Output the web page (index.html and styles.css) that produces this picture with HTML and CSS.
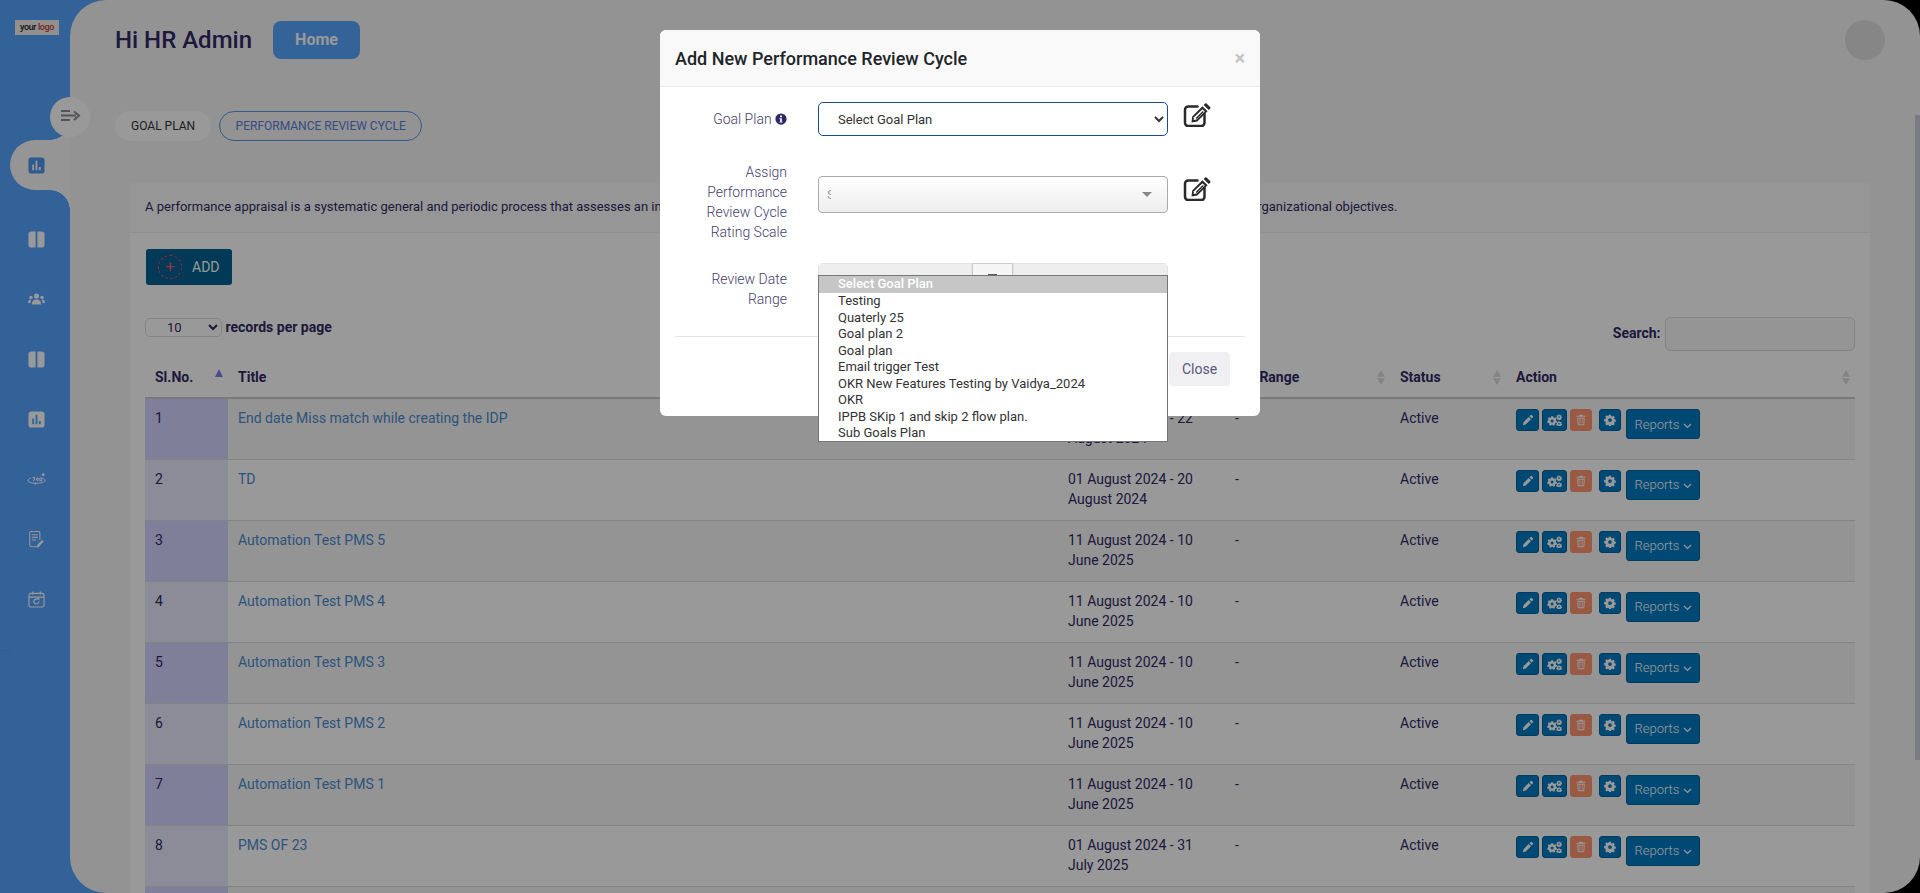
FILE: index.html
```html
<!DOCTYPE html>
<html lang="en">
<head>
    <meta charset="UTF-8">
    <title>Performance Review Cycle</title>
    <link rel="stylesheet" href="styles.css">
</head>
<body>
    <svg class="sprite" aria-hidden="true">
        <symbol id="i-pencil" viewBox="0 0 16 16"><path d="M11.3 1.6a1.4 1.4 0 0 1 2 0l1.1 1.1a1.4 1.4 0 0 1 0 2L13 6.100 9.900 3zM8.900 4 12 7.100 5 14.100 1.200 15l.8-3.900z"/></symbol>
        <symbol id="i-cog" viewBox="0 0 16 16"><path fill-rule="evenodd" d="M6.700 1h2.600l.4 1.900 1.200.5 1.600-1 1.900 1.900-1 1.600.5 1.200 1.900.4v2.600l-1.900.4-.5 1.200 1 1.600-1.900 1.900-1.600-1-1.200.5-.4 1.900H6.700l-.4-1.900-1.200-.5-1.600 1-1.900-1.900 1-1.600-.5-1.200L.2 9.300V6.700l1.900-.4.5-1.200-1-1.600 1.900-1.900 1.600 1 1.200-.5zM8 5.500a2.500 2.500 0 1 0 0 5 2.500 2.500 0 0 0 0-5z"/></symbol>
        <symbol id="i-cogs" viewBox="0 0 20 16"><path fill-rule="evenodd" d="M5.500 3h2.600l.4 1.500 1.300.6 1.400-.7 1.500 1.800-1 1.200.3 1.400 1.400.7-.5 2.300-1.600.1-.9 1.100.3 1.500-2.200 1-1-1.200H6.100l-1 1.200-2.200-1 .3-1.500-.9-1.100-1.600-.1-.5-2.300 1.400-.7.3-1.400-1-1.200 1.500-1.800 1.400.7 1.300-.6zM6.800 7.300a2 2 0 1 0 0 4 2 2 0 0 0 0-4z"/><path fill-rule="evenodd" d="M15.200.5h1.600l.2 1 .8.400.9-.5.900 1.100-.6.800.2.800.9.400-.3 1.400-1 .1-.5.700.2 1-1.300.6-.7-.8h-.8l-.6.800-1.300-.6.200-1-.5-.7-1-.1-.3-1.400.9-.4.2-.8-.6-.8.9-1.100.9.5.8-.4zM16 3a1.100 1.100 0 1 0 0 2.200A1.100 1.100 0 0 0 16 3z"/><path fill-rule="evenodd" d="M15.200 9.500h1.600l.2 1 .8.400.9-.5.900 1.100-.6.800.2.800.9.400-.3 1.400-1 .1-.5.700.2 1-1.300.6-.7-.8h-.8l-.6.800-1.300-.6.200-1-.5-.7-1-.1-.3-1.400.9-.4.200-.8-.6-.8.9-1.100.9.500.8-.4zM16 12a1.100 1.100 0 1 0 0 2.200 1.100 1.100 0 0 0 0-2.200z"/></symbol>
        <symbol id="i-trash" viewBox="0 0 16 16"><path d="M6 1h4l.7 1.300H14v1.400H2V2.300h3.300z"/><path fill-rule="evenodd" d="M3 5h10l-.6 9a1.200 1.200 0 0 1-1.200 1H4.800a1.200 1.200 0 0 1-1.200-1zm1.300 1.200.5 7.600h6.400l.5-7.600z"/><path d="M6 7h1v5.500H6zM9 7h1v5.500H9z"/></symbol>
        <symbol id="i-edit" viewBox="0 0 28 24"><path d="M14.500 3.500H5.200A3.200 3.200 0 0 0 2 6.700v13.100A3.200 3.200 0 0 0 5.200 23h13.100a3.200 3.200 0 0 0 3.200-3.200V11" fill="none" stroke="currentColor" stroke-width="2.500" stroke-linecap="round"/><path d="M23.500.5l3.800 3.700c.4.400.4 1 0 1.400l-1.500 1.500-5.200-5.100L22.100.5c.4-.4 1-.4 1.400 0zM19.400 3.200l5.200 5.100-10.300 10.200-5.800 1 .7-6z"/><path d="M19.500 6.200l2.300 2.300-8.200 8.100-3 .5.400-2.800z" fill="#fff"/><path d="M19.800 7.900l1 1-7.200 7.100-1-1z"/></symbol>
        <symbol id="i-chart" viewBox="0 0 18 18"><path fill-rule="evenodd" d="M3.500.5h11a3 3 0 0 1 3 3v11a3 3 0 0 1-3 3h-11a3 3 0 0 1-3-3v-11a3 3 0 0 1 3-3zM4.500 8v6h2V8zm3.500-4v10h2V4zm3.500 6.500V14h2v-3.500z"/></symbol>
        <symbol id="i-split" viewBox="0 0 18 18"><path d="M8 .5v17H3.500a3 3 0 0 1-3-3v-11a3 3 0 0 1 3-3zM10 .5h4.500a3 3 0 0 1 3 3v11a3 3 0 0 1-3 3H10z"/></symbol>
    </svg>

    <div class="layout">
        <aside class="sidebar">
            <div class="logo"><span>your</span> <span class="logo-word">logo</span></div>
            <button class="collapse-btn" type="button" aria-label="Toggle menu">
                <svg width="20" height="12" viewBox="0 0 20 12"><path d="M0 1h9M0 5.500h15M0 10h9M13 1.500 18 5.500 13 10" fill="none" stroke="currentColor" stroke-width="2"/></svg>
            </button>
            <nav class="nav">
                <a class="nav-item active"><svg class="nav-icon"><use href="#i-chart"/></svg></a>
                <a class="nav-item"><svg class="nav-icon"><use href="#i-split"/></svg></a>
                <a class="nav-item">
                    <svg class="nav-icon" viewBox="0 0 20 16"><circle cx="10" cy="4" r="3"/><path d="M4.500 14c0-4 2-6 5.500-6s5.500 2 5.500 6z"/><circle cx="3.500" cy="5.500" r="2"/><circle cx="16.500" cy="5.500" r="2"/><path d="M0 12c0-2.500 1-4 3-4l.8.300C3 9.500 3 11 3 12zM20 12c0-2.500-1-4-3-4l-.8.300c.8 1.200.8 2.700.8 3.700z"/></svg>
                </a>
                <a class="nav-item"><svg class="nav-icon"><use href="#i-split"/></svg></a>
                <a class="nav-item"><svg class="nav-icon"><use href="#i-chart"/></svg></a>
                <a class="nav-item">
                    <svg class="nav-icon wide" viewBox="0 0 20 14"><g fill="none" stroke="currentColor"><path d="M4 5.500C2 6.200 1 7 1 8c0 1.600 3.500 3 9 3s9-1.400 9-3c0-1-1-1.800-3-2.500"/><path d="M6 5h2.500l-1.500 1.300c1.500 0 1.500 2-.5 1.700M12 6.500c-.4-1.800-2-1.800-2 .2s2 1.800 2 .6-2-1-2 0M13.500 5.500h2v3h-2z"/></g><circle cx="17" cy="2" r="1.500"/><path d="M8 9.500v3.500l2-1.700z"/></svg>
                </a>
                <a class="nav-item">
                    <svg class="nav-icon" viewBox="0 0 18 20"><g fill="none" stroke="currentColor" stroke-width="1.200"><path d="M11 18.500H3a2 2 0 0 1-2-2v-14a2 2 0 0 1 2-2h8a2 2 0 0 1 2 2v8"/><path d="M3.500 4.500h7M3.500 7.500h7M3.500 10.500h5"/></g><path d="M15.500 10.500l2 1.700-5.500 6.300-2.800.9.600-2.900z"/></svg>
                </a>
                <a class="nav-item">
                    <svg class="nav-icon" viewBox="0 0 18 18"><g fill="none" stroke="currentColor" stroke-width="1.200"><rect x="1" y="2.500" width="16" height="14.500" rx="2"/><path d="M1 6.500h16M5 .5v3.500M13 .5v3.500"/><path d="M11.500 11a2.700 2.700 0 1 1-1-2"/></g><path d="M9.500 7.500h2.500v2.500z"/></svg>
                </a>
            </nav>
            <span class="side-mark"></span>
        </aside>

        <main class="panel">
            <header class="topbar">
                <h1 class="greeting">Hi HR Admin</h1>
                <a class="home-btn">Home</a>
                <span class="avatar"></span>
            </header>

            <div class="tabs">
                <a class="tab">GOAL PLAN</a>
                <a class="tab tab-active">PERFORMANCE REVIEW CYCLE</a>
            </div>

            <section class="card">
                <div class="card-head">A performance appraisal is a systematic general and periodic process that assesses an individual employee's job performance and productivity in relation to certain pre-established criteria and organizational objectives.</div>
                <div class="card-body">
                    <button class="add-btn" type="button">
                        <span class="add-ring">+</span>ADD
                    </button>

                    <div class="table-tools">
                        <label class="per-page">
                            <select class="per-page-select"><option>10</option></select>
                            records per page
                        </label>
                        <label class="search">Search: <input type="text"></label>
                    </div>

                    <table class="data-table">
                        <colgroup>
                            <col class="c-no"><col class="c-title"><col class="c-date"><col class="c-range"><col class="c-status"><col class="c-action">
                        </colgroup>
                        <thead>
                            <tr>
                                <th class="sort-up">Sl.No.</th>
                                <th class="sort">Title</th>
                                <th class="sort">Review Period</th>
                                <th class="sort">Set Range</th>
                                <th class="sort">Status</th>
                                <th class="sort">Action</th>
                            </tr>
                        </thead>
                        <tbody id="rows"></tbody>
                    </table>
                </div>
            </section>
        </main>
    </div>

    <span class="scroll-thumb"></span>
    <div class="backdrop"></div>

    <div class="modal">
        <div class="modal-head">
            <h2>Add New Performance Review Cycle</h2>
            <span class="modal-close">&times;</span>
        </div>
        <div class="modal-body">
            <div class="field">
                <label class="field-label">Goal Plan
                    <svg class="info" viewBox="0 0 16 16"><path fill-rule="evenodd" d="M8 .5a7.500 7.500 0 1 1 0 15 7.500 7.500 0 0 1 0-15zM6.800 3.200v2.300h2.400V3.200zM6 7v1.300h.9v3.200H6v1.300h4v-1.300h-.9V7z"/></svg>
                </label>
                <div class="field-control">
                    <select class="goal-select"><option>Select Goal Plan</option></select>
                </div>
                <svg class="edit-icon"><use href="#i-edit"/></svg>
            </div>

            <div class="field field-scale">
                <label class="field-label">Assign Performance Review Cycle Rating Scale</label>
                <div class="field-control">
                    <div class="scale-select"><span>S</span><i></i></div>
                </div>
                <svg class="edit-icon"><use href="#i-edit"/></svg>
            </div>

            <div class="field field-range">
                <label class="field-label">Review Date Range</label>
                <div class="field-control">
                    <div class="range-group">
                        <span class="range-input"></span>
                        <span class="range-cal"><b></b></span>
                        <span class="range-input"></span>
                    </div>
                </div>
            </div>

            <ul class="goal-menu">
                <li class="selected">Select Goal Plan</li>
                <li>Testing</li>
                <li>Quaterly 25</li>
                <li>Goal plan 2</li>
                <li>Goal plan</li>
                <li>Email trigger Test</li>
                <li>OKR New Features Testing by Vaidya_2024</li>
                <li>OKR</li>
                <li>IPPB SKip 1 and skip 2 flow plan.</li>
                <li>Sub Goals Plan</li>
            </ul>
        </div>
        <div class="modal-foot">
            <button class="close-btn" type="button">Close</button>
        </div>
    </div>

    <script>
        const data = [
            ['End date Miss match while creating the IDP', '01 August 2024 - 22 August 2024'],
            ['TD', '01 August 2024 - 20 August 2024'],
            ['Automation Test PMS 5', '11 August 2024 - 10 June 2025'],
            ['Automation Test PMS 4', '11 August 2024 - 10 June 2025'],
            ['Automation Test PMS 3', '11 August 2024 - 10 June 2025'],
            ['Automation Test PMS 2', '11 August 2024 - 10 June 2025'],
            ['Automation Test PMS 1', '11 August 2024 - 10 June 2025'],
            ['PMS OF 23', '01 August 2024 - 31 July 2025']
        ];

        const actions = `
            <div class="actions">
                <button class="act"><svg><use href="#i-pencil"/></svg></button>
                <button class="act act-wide"><svg><use href="#i-cogs"/></svg></button>
                <button class="act act-del"><svg><use href="#i-trash"/></svg></button>
                <button class="act act-gap"><svg><use href="#i-cog"/></svg></button>
                <button class="reports">Reports <svg width="9" height="6" viewBox="0 0 9 6"><path d="M1 1l3.500 3.500L8 1" fill="none" stroke="currentColor" stroke-width="1.200"/></svg></button>
            </div>`;

        // строки таблицы
        document.getElementById('rows').innerHTML = data.map((row, i) => `
            <tr>
                <td class="no">${i + 1}</td>
                <td><a class="row-link">${row[0]}</a></td>
                <td>${row[1]}</td>
                <td>-</td>
                <td>Active</td>
                <td>${actions}</td>
            </tr>`).join('') + '<tr><td class="no"></td><td colspan="5"></td></tr>';
    </script>
</body>
</html>
```

FILE: styles.css
```css
* {
    box-sizing: border-box;
}

html, body {
    height: 100%;
}

body {
    margin: 0;
    background: #000;
    font-family: Roboto, sans-serif;
    font-size: 13px;
    color: #2f2a66;
    overflow: hidden;
}

.sprite {
    display: none;
}

svg {
    fill: currentColor;
}

.layout {
    display: flex;
    height: 893px;
    background: linear-gradient(to right, #55a3ff 200px, #000 200px);
}

/* Боковое меню */
.sidebar {
    width: 70px;
    flex: none;
    position: relative;
    background: #55a3ff;
    color: #fff;
}

.logo {
    position: absolute;
    top: 20px;
    left: 15px;
    width: 44px;
    height: 15px;
    background: #f4f1ee;
    font-size: 9px;
    font-weight: 500;
    letter-spacing: -0.4px;
    text-align: center;
    line-height: 15px;
    color: #222;
}

.logo-word {
    color: #c0392b;
}

.collapse-btn {
    position: absolute;
    top: 97px;
    left: 50px;
    width: 40px;
    height: 40px;
    border: none;
    border-radius: 50%;
    background: #fff;
    color: #8a8a9a;
    z-index: 3;
    padding: 0 0 0 1px;
}

.nav {
    position: absolute;
    top: 140px;
    left: 0;
    width: 70px;
}

.nav-item {
    display: flex;
    align-items: center;
    height: 60px;
    padding-left: 28px;
    color: #fff;
}

.nav-icon {
    width: 17px;
    height: 17px;
}

.nav-icon.wide {
    width: 19px;
    margin-left: -1px;
}

.nav-item.active {
    height: 50px;
    margin-left: 10px;
    padding-left: 18px;
    margin-bottom: 19px;
    background: #f8f8f9;
    border-radius: 25px 0 0 25px;
    position: relative;
    color: #4f97f0;
}

/* вогнутые углы активного пункта */
.nav-item.active:before, .nav-item.active:after {
    content: '';
    position: absolute;
    right: 0;
    width: 20px;
    height: 20px;
}

.nav-item.active:before {
    top: -20px;
    background: radial-gradient(circle at 0 0, #55a3ff 19.5px, #f8f8f9 20px);
}

.nav-item.active:after {
    bottom: -20px;
    background: radial-gradient(circle at 0 100%, #55a3ff 19.5px, #f8f8f9 20px);
}

.side-mark {
    position: absolute;
    top: 650px;
    left: 0;
    width: 10px;
    height: 1px;
    background: #4f97f0;
}

/* Основная панель */
.panel {
    flex: 1;
    min-width: 0;
    height: 893px;
    padding: 0 45px;
    background: #f5f5f7;
    border-radius: 36px;
    overflow: hidden;
}

.topbar {
    display: flex;
    align-items: center;
    height: 80px;
}

.greeting {
    margin: 0 21px 0 0;
    font-size: 24px;
    font-weight: 500;
    color: #2f2a66;
}

.home-btn {
    width: 87px;
    height: 38px;
    line-height: 37px;
    text-align: center;
    border-radius: 8px;
    background: #58a6ff;
    color: #fff;
    font-size: 16px;
    font-weight: 700;
}

.avatar {
    width: 40px;
    height: 40px;
    margin: 0 -10px 0 auto;
    border-radius: 50%;
    background: #e0e0e0;
}

.tabs {
    display: flex;
    gap: 8px;
    margin-top: 31px;
}

.tab {
    height: 30px;
    line-height: 30px;
    padding: 0 16px;
    border-radius: 15px;
    background: #fff;
    font-size: 12px;
    color: #333;
}

.tab-active {
    line-height: 28px;
    padding: 0 15.500px;
    background: transparent;
    border: 1px solid #5a96e4;
    color: #5a7fd8;
}

.card {
    margin: 42px 5px 0 15px;
    background: #fff;
}

.card-head {
    height: 50px;
    line-height: 48px;
    padding-left: 15px;
    background: #fbfbfb;
    border-bottom: 1px solid #f0f0f0;
    white-space: nowrap;
    overflow: hidden;
    font-size: 13px;
}

.card-body {
    padding: 16px 15px 0;
}

.add-btn {
    display: flex;
    align-items: center;
    gap: 10px;
    width: 86px;
    height: 36px;
    margin-left: 1px;
    padding: 0 0 0 12px;
    border: none;
    border-radius: 3px;
    background: #00618f;
    color: #fff;
    font-family: inherit;
    font-size: 14px;
}

.add-ring {
    width: 24px;
    height: 24px;
    line-height: 20px;
    border: 1px dashed #e8486f;
    border-radius: 50%;
    color: #f0557a;
    font-size: 17px;
    text-align: center;
}

.table-tools {
    display: flex;
    justify-content: space-between;
    align-items: flex-start;
    margin-top: 33px;
    height: 42px;
    font-size: 14px;
    font-weight: 700;
}

.per-page-select {
    width: 77px;
    height: 19px;
    padding: 0 0 0 17px;
    border: 1px solid #ddd;
    border-radius: 5px;
    background: transparent;
    font-family: inherit;
    font-size: 13px;
    color: #2f2a66;
}

.search input {
    width: 190px;
    height: 34px;
    margin-left: 1px;
    border: 1px solid #ddd;
    border-radius: 5px;
    background: #f8f8f8;
    vertical-align: middle;
}

.search {
    margin-top: -1px;
}

.data-table {
    width: 100%;
    border-collapse: collapse;
    table-layout: fixed;
}

.c-no { width: 83px; }
.c-date { width: 167px; }
.c-range { width: 165px; }
.c-status { width: 116px; }
.c-action { width: 349px; }

.data-table th {
    position: relative;
    height: 38px;
    padding: 0 10px 4px;
    border-bottom: 2px solid #ccc;
    text-align: left;
    font-size: 14px;
    font-weight: 700;
}

.data-table th:after {
    content: '';
    position: absolute;
    right: 5px;
    top: 10px;
    width: 8px;
    height: 15px;
    background: #dcdcdc;
    clip-path: polygon(50% 0, 100% 45%, 50% 45%, 50% 55%, 100% 55%, 50% 100%, 0 55%, 50% 55%, 50% 45%, 0 45%);
}

.data-table th.sort-up:after {
    top: 9px;
    height: 8px;
    background: #7f7fe6;
    clip-path: polygon(50% 0, 100% 100%, 0 100%);
}

.data-table td {
    height: 61px;
    padding: 9px 10px 0;
    border-bottom: 1px solid #ddd;
    vertical-align: top;
    font-size: 14px;
    line-height: 20px;
}

.data-table tr:nth-child(odd) td {
    background: rgba(0, 0, 0, 0.03);
}

.data-table td.no {
    background: #e9e9ff;
}

.data-table tr:nth-child(odd) td.no {
    background: #d4d4ff;
}

.row-link {
    color: #4a8cd0;
}

.actions {
    display: flex;
    align-items: flex-start;
    gap: 3px;
    margin-top: 1px;
}

.act {
    width: 23px;
    height: 22px;
    padding: 0;
    border: 1px solid #00629c;
    border-radius: 3px;
    background: #007bc2;
    color: #fff;
    display: flex;
    align-items: center;
    justify-content: center;
}

.act svg {
    width: 12px;
    height: 12px;
}

.act-wide {
    width: 25px;
}

.act-wide svg {
    width: 15px;
}

.act-del {
    width: 22px;
    background: #ff9470;
    border-color: #ff9470;
}

.act-gap {
    width: 22px;
    margin-left: 4px;
}

.reports {
    width: 74px;
    height: 30px;
    margin-left: 2px;
    padding: 0;
    border: 1px solid #00629c;
    border-radius: 3px;
    background: #007bc2;
    color: #fff;
    font-family: inherit;
    font-size: 13px;
    font-weight: 300;
}

.scroll-thumb {
    position: absolute;
    top: 115px;
    right: 0;
    width: 5px;
    height: 645px;
    background: #cdcddc;
}

.backdrop {
    position: fixed;
    inset: 0;
    z-index: 5;
    background: rgba(0, 0, 0, 0.4);
}

/* Модальное окно */
.modal {
    position: absolute;
    top: 30px;
    left: 660px;
    z-index: 6;
    width: 600px;
    background: #fff;
    border-radius: 6px;
    color: #5b5680;
}

.modal-head {
    display: flex;
    justify-content: space-between;
    align-items: center;
    height: 57px;
    padding: 0 15px;
    background: #f9f9f9;
    border-bottom: 1px solid #e9e9e9;
    border-radius: 6px 6px 0 0;
}

.modal-head h2 {
    margin: 0;
    font-size: 18px;
    font-weight: 500;
    color: #212529;
}

.modal-close {
    font-size: 20px;
    font-weight: 700;
    color: #c4c4c4;
}

.modal-body {
    position: relative;
    height: 250px;
    margin: 0 15px;
    border-bottom: 1px solid #e5e5e5;
    padding-top: 15px;
}

.field {
    display: flex;
    align-items: flex-start;
    height: 74px;
}

.field-label {
    width: 112px;
    flex: none;
    padding: 7px 0 0 10px;
    text-align: right;
    line-height: 20px;
    font-size: 14px;
    font-weight: 300;
    color: #45406c;
}

.field-control {
    width: 350px;
    margin-left: 31px;
    flex: none;
}

.info {
    width: 12px;
    height: 12px;
    vertical-align: -1px;
    color: #2f2a66;
}

.goal-select {
    width: 100%;
    height: 34px;
    padding-left: 15px;
    border: 1px solid #1a4a8f;
    border-radius: 5px;
    background: #fff;
    font-family: inherit;
    font-size: 13px;
    color: #333;
}

.edit-icon {
    width: 28px;
    height: 24px;
    flex: none;
    margin: 1px 0 0 15px;
    color: #2a2a2a;
}

.field-scale {
    height: 87px;
}

.field-scale .field-label {
    padding-top: 0;
    margin-top: -14px;
}

.scale-select {
    position: relative;
    height: 37px;
    border: 1px solid #aaa;
    border-radius: 4px;
    background: linear-gradient(#fff, #eee);
    padding-left: 8px;
    line-height: 35px;
    color: #999;
    font-size: 13px;
}

.scale-select span {
    display: block;
    width: 4px;
    overflow: hidden;
}

.scale-select i {
    position: absolute;
    right: 15px;
    top: 15px;
    border: 5px solid transparent;
    border-top: 5px solid #888;
}

.field-range .field-label {
    padding-top: 6px;
}

.range-group {
    display: flex;
    height: 34px;
    border-radius: 5px;
    overflow: hidden;
    background: #eee;
}

.range-input {
    flex: 1;
    border: 1px solid #e3e3e3;
}

.range-input:first-child {
    flex: none;
    width: 154px;
}

.range-cal {
    width: 41px;
    background: #f5f5f5;
    border: 1px solid #ccc;
    text-align: center;
}

.range-cal b {
    display: block;
    width: 9px;
    height: 2px;
    margin: 10px auto 0;
    background: #555;
}

/* Открытый список select */
.goal-menu {
    position: absolute;
    top: 188px;
    left: 143px;
    width: 350px;
    height: 167px;
    margin: 0;
    padding: 0;
    list-style: none;
    border: 1px solid #767676;
    background: #fff;
    color: #333;
    font-size: 13px;
    z-index: 2;
}

.goal-menu li {
    height: 16.500px;
    line-height: 16.500px;
    padding-left: 19px;
}

.goal-menu li.selected {
    height: 17px;
    line-height: 16px;
    background: #c6c6c6;
    color: #fff;
    font-weight: 500;
}

.modal-foot {
    display: flex;
    justify-content: flex-end;
    height: 79px;
    padding: 15px 30px 0 0;
}

.close-btn {
    width: 61px;
    height: 34px;
    border: none;
    border-radius: 4px;
    background: #f0f0f2;
    color: #5b5680;
    font-family: inherit;
    font-size: 14px;
}
```
